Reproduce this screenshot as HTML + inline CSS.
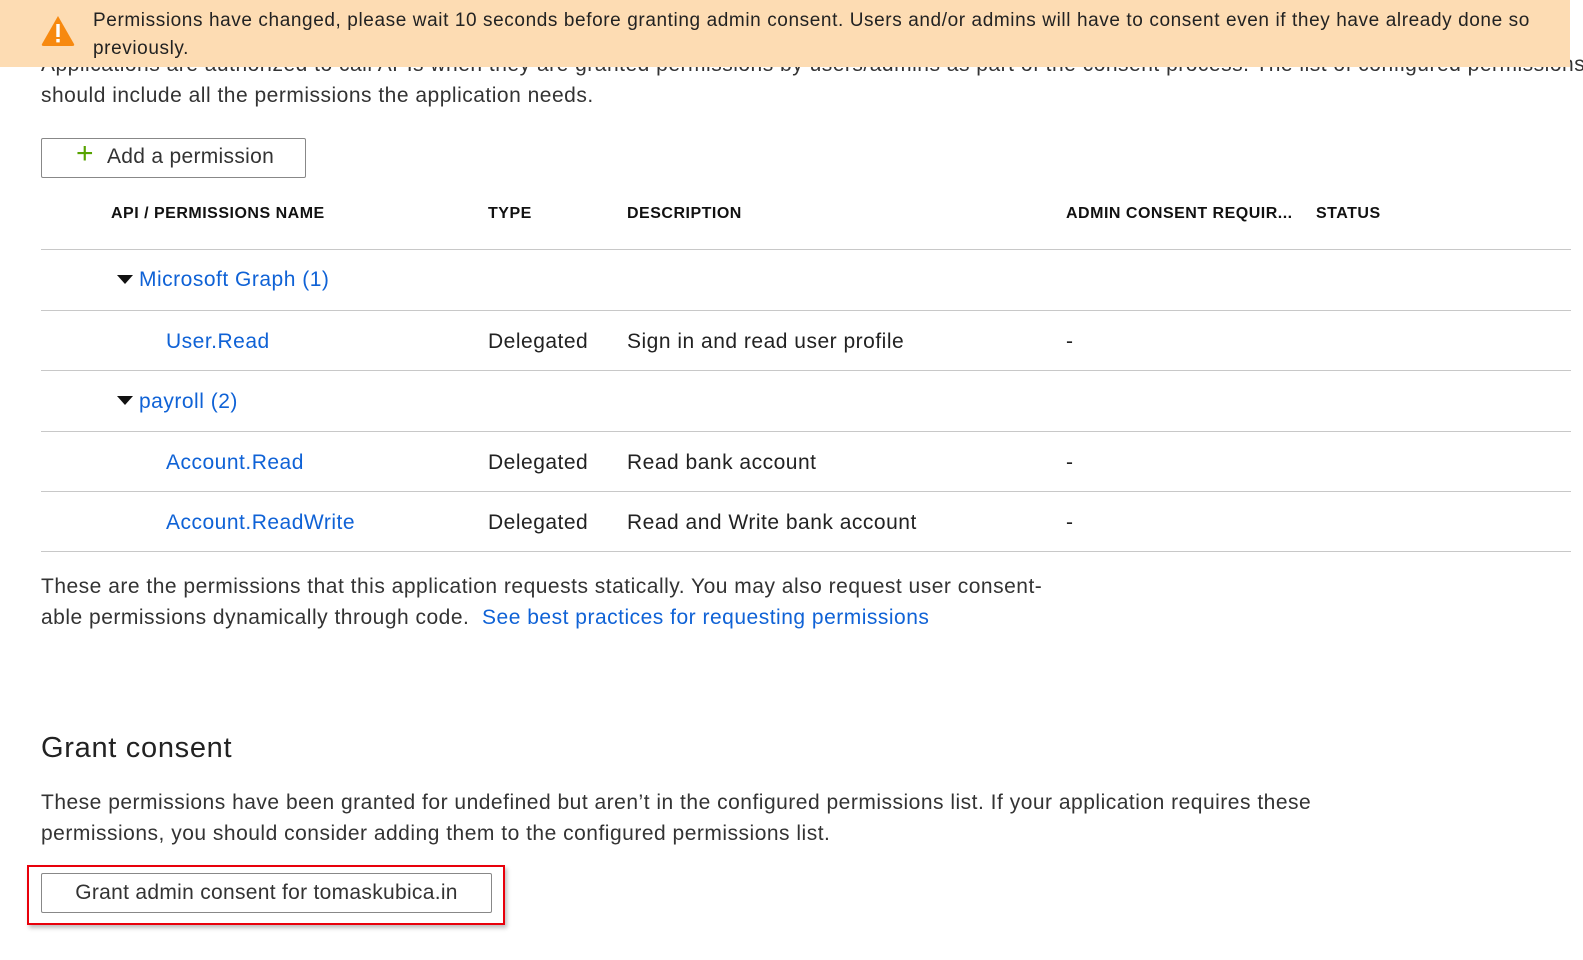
<!DOCTYPE html>
<html><head><meta charset="utf-8"><style>
body{margin:0;width:1583px;height:960px;background:#fff;font-family:"Liberation Sans",sans-serif;color:#222;overflow:hidden;position:relative}
.a{position:absolute;white-space:nowrap}
.t{font-size:21px;letter-spacing:0.5px}
.l{color:#0f62d6}
.h{font-size:16px;font-weight:bold;color:#111;letter-spacing:0.5px}
.line{position:absolute;left:41px;width:1530px;height:1px;background:#c8c8c8}
.tri{position:absolute;width:0;height:0;border-left:8px solid transparent;border-right:8px solid transparent;border-top:9px solid #111}
</style></head><body>
<div class="a t" style="left:41px;top:53px;color:#333">Applications are authorized to call APIs when they are granted permissions by users/admins as part of the consent process. The list of configured permissions</div>
<div class="a" style="left:0;top:0;width:1570px;height:67px;background:#fddcb3"></div>
<svg class="a" style="left:40px;top:14px" width="36" height="33" viewBox="0 0 36 33"><path d="M18 2 L34 30 Q35 32 32 32 L4 32 Q1 32 2 30 Z" fill="#f7890f"/><rect x="16.3" y="10" width="3.4" height="13" fill="#fff"/><rect x="16.3" y="25" width="3.4" height="3.4" fill="#fff"/></svg>
<div class="a" style="left:93px;top:10px;font-size:19px;color:#222;letter-spacing:0.6px">Permissions have changed, please wait 10 seconds before granting admin consent. Users and/or admins will have to consent even if they have already done so</div>
<div class="a" style="left:93px;top:38px;font-size:19px;color:#222;letter-spacing:0.6px">previously.</div>
<div class="a t" style="left:41px;top:84px;color:#333">should include all the permissions the application needs.</div>
<div class="a" style="left:41px;top:138px;width:265px;height:40px;border:1px solid #888;border-radius:2px;box-sizing:border-box"></div>
<div class="a" style="left:76px;top:138px;font-size:30px;color:#57a300;line-height:32px">+</div>
<div class="a t" style="left:107px;top:145px;color:#333;letter-spacing:0.3px">Add a permission</div>
<div class="a h" style="left:111px;top:205px">API / PERMISSIONS NAME</div>
<div class="a h" style="left:488px;top:205px">TYPE</div>
<div class="a h" style="left:627px;top:205px">DESCRIPTION</div>
<div class="a h" style="left:1066px;top:205px">ADMIN CONSENT REQUIR...</div>
<div class="a h" style="left:1316px;top:205px">STATUS</div>
<div class="line" style="top:249px"></div>
<div class="tri" style="left:117px;top:275px"></div>
<div class="a t l" style="left:139px;top:268px">Microsoft Graph (1)</div>
<div class="line" style="top:310px"></div>
<div class="a t l" style="left:166px;top:330px">User.Read</div>
<div class="a t" style="left:488px;top:330px">Delegated</div>
<div class="a t" style="left:627px;top:330px">Sign in and read user profile</div>
<div class="a t" style="left:1066px;top:330px">-</div>
<div class="line" style="top:370px"></div>
<div class="tri" style="left:117px;top:396px"></div>
<div class="a t l" style="left:139px;top:390px">payroll (2)</div>
<div class="line" style="top:431px"></div>
<div class="a t l" style="left:166px;top:451px">Account.Read</div>
<div class="a t" style="left:488px;top:451px">Delegated</div>
<div class="a t" style="left:627px;top:451px">Read bank account</div>
<div class="a t" style="left:1066px;top:451px">-</div>
<div class="line" style="top:491px"></div>
<div class="a t l" style="left:166px;top:511px">Account.ReadWrite</div>
<div class="a t" style="left:488px;top:511px">Delegated</div>
<div class="a t" style="left:627px;top:511px">Read and Write bank account</div>
<div class="a t" style="left:1066px;top:511px">-</div>
<div class="line" style="top:551px"></div>
<div class="a t" style="left:41px;top:575px;color:#333">These are the permissions that this application requests statically. You may also request user consent-</div>
<div class="a t" style="left:41px;top:606px;color:#333">able permissions dynamically through code. &nbsp;<span class="l">See best practices for requesting permissions</span></div>
<div class="a" style="left:41px;top:732px;font-size:29px;color:#222;letter-spacing:0.7px">Grant consent</div>
<div class="a t" style="left:41px;top:791px;color:#333">These permissions have been granted for undefined but aren’t in the configured permissions list. If your application requires these</div>
<div class="a t" style="left:41px;top:822px;color:#333">permissions, you should consider adding them to the configured permissions list.</div>
<div class="a" style="left:27px;top:865px;width:478px;height:60px;border:2px solid #e8000b;box-sizing:border-box;box-shadow:2px 3px 4px rgba(0,0,0,.25)"></div>
<div class="a" style="left:41px;top:873px;width:451px;height:40px;border:1px solid #888;border-radius:2px;box-sizing:border-box;background:#fff"></div>
<div class="a t" style="left:41px;top:881px;width:451px;text-align:center;color:#333;letter-spacing:0.3px">Grant admin consent for tomaskubica.in</div>
</body></html>
